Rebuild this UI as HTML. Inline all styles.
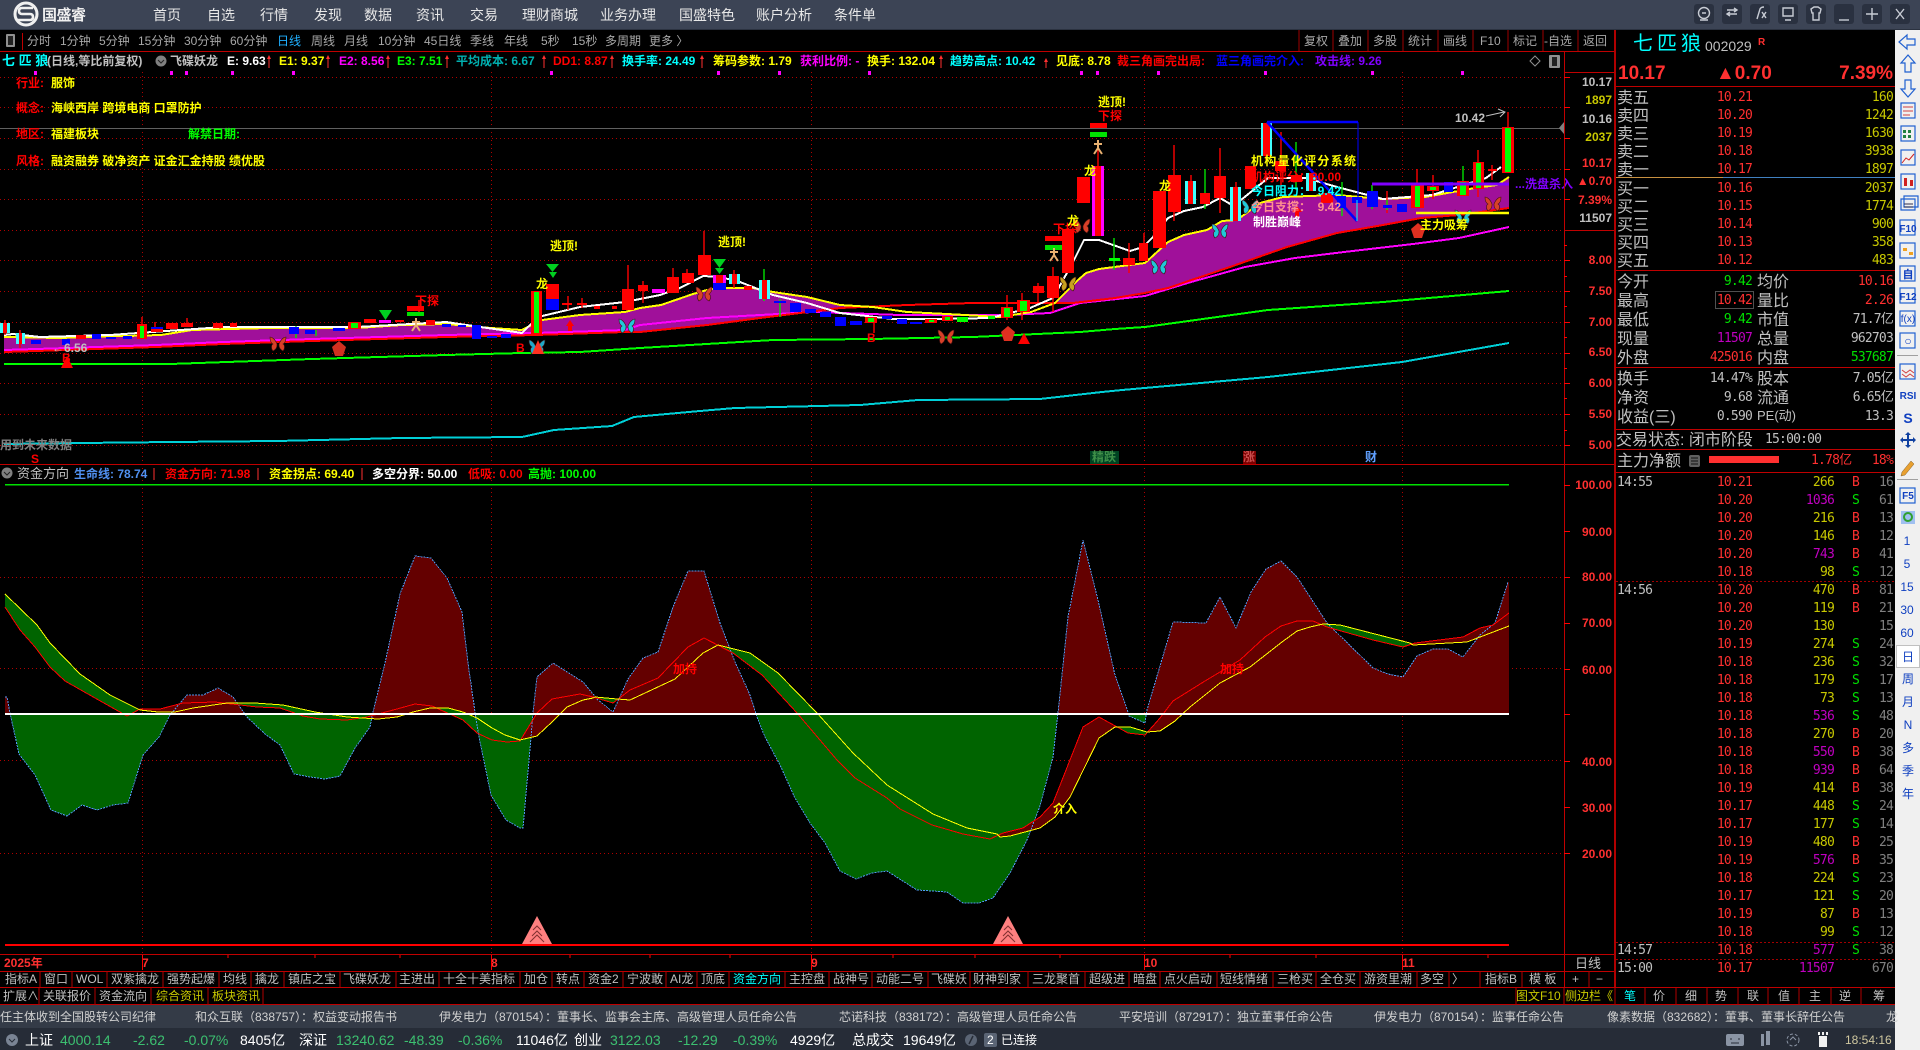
<!DOCTYPE html>
<html lang="zh-CN">
<head>
<meta charset="utf-8">
<title>七匹狼 002029</title>
<style>
html,body{margin:0;padding:0;background:#000;width:1920px;height:1050px;overflow:hidden}
svg{display:block}
text{font-family:"Liberation Sans","Noto Sans CJK SC",sans-serif;font-size:12px;white-space:pre}
.b{font-weight:bold}
.g{fill:#c0c0c0}
.r{fill:#ff3030}
.rr{fill:#ff0000}
.y{fill:#ffff00}
.c{fill:#00ffff}
.gr{fill:#00ff00}
.m{fill:#ff00ff}
.w{fill:#fff}
.e{text-anchor:end}
.mid{text-anchor:middle}
.n{font-family:"DejaVu Sans Mono","Liberation Mono",monospace;font-size:13px;letter-spacing:-.8px}
.l{font-size:16px;fill:#c0c0c0}
.o{fill:#c8c800}
.p{fill:#c000c0}
.d{fill:#808080}
.ng{fill:#00e000}
.st{font-size:14px}
.ax{font-weight:bold;fill:#ff3030;text-anchor:end}
.sb{fill:#1040c0;text-anchor:middle}
polyline{shape-rendering:crispEdges}
</style>
</head>
<body>
<svg width="1920" height="1050" viewBox="0 0 1920 1050" xmlns="http://www.w3.org/2000/svg">
<defs>
<path id="bfly" stroke="#401010" stroke-width=".6" d="M-1 0C-3-5-6-7-8-7C-8-3-7-1-5 0C-7 1-7 5-5 7C-3 6-1 4-1 1ZM1 0C3-5 6-7 8-7C8-3 7-1 5 0C7 1 7 5 5 7C3 6 1 4 1 1Z"/>
<clipPath id="up"><rect x="0" y="480" width="1564" height="234"/></clipPath>
<clipPath id="dn"><rect x="0" y="714" width="1564" height="240"/></clipPath>
<clipPath id="aboveRed"><polygon points="5,400 5,607 20,630 35,647 50,667 65,681 95,698 127,716 140,709 160,709 183,703 215,702 257,707 280,708 303,716 320,719 347,720 367,717 397,709 415,704 432,706 463,720 477,733 492,740 507,742 520,741 537,713 552,699 580,694 593,697 613,703 630,690 658,678 688,647 704,638 733,653 762,675 797,713 837,760 855,778 887,798 900,809 932,825 963,834 990,839 1003,833 1023,828 1040,817 1053,803 1083,727 1099,717 1128,733 1145,735 1160,718 1173,701 1205,681 1240,660 1265,637 1281,626 1297,621 1313,621 1327,627 1373,640 1403,647 1415,643 1463,637 1480,628 1493,625 1509,613 1509,400"/></clipPath>
<clipPath id="belowRed"><polygon points="5,1000 5,607 20,630 35,647 50,667 65,681 95,698 127,716 140,709 160,709 183,703 215,702 257,707 280,708 303,716 320,719 347,720 367,717 397,709 415,704 432,706 463,720 477,733 492,740 507,742 520,741 537,713 552,699 580,694 593,697 613,703 630,690 658,678 688,647 704,638 733,653 762,675 797,713 837,760 855,778 887,798 900,809 932,825 963,834 990,839 1003,833 1023,828 1040,817 1053,803 1083,727 1099,717 1128,733 1145,735 1160,718 1173,701 1205,681 1240,660 1265,637 1281,626 1297,621 1313,621 1327,627 1373,640 1403,647 1415,643 1463,637 1480,628 1493,625 1509,613 1509,1000"/></clipPath>
</defs>

<rect width="1920" height="1050" fill="#000"/>

<!-- title bar -->
<rect width="1920" height="30" fill="#3c4455"/>
<rect y="29" width="1920" height="1" fill="#2b3240"/>
<circle cx="26" cy="14" r="11" fill="none" stroke="#f0f0f0" stroke-width="3"/>
<path d="M33 8H22q-3 0-3 3t3 3h8q3 0 3 3t-3 3H16" fill="none" stroke="#f0f0f0" stroke-width="2.6"/>
<text x="42" y="20" class="b" style="font-size:15px" fill="#f0f0f0" textLength="44">国盛睿</text>
<g style="font-size:14px" fill="#e8e8e8">
<text x="153" y="20" style="font-size:14px">首页</text>
<text x="207" y="20" style="font-size:14px">自选</text>
<text x="260" y="20" style="font-size:14px">行情</text>
<text x="314" y="20" style="font-size:14px">发现</text>
<text x="364" y="20" style="font-size:14px">数据</text>
<text x="416" y="20" style="font-size:14px">资讯</text>
<text x="470" y="20" style="font-size:14px">交易</text>
<text x="522" y="20" style="font-size:14px">理财商城</text>
<text x="600" y="20" style="font-size:14px">业务办理</text>
<text x="679" y="20" style="font-size:14px">国盛特色</text>
<text x="756" y="20" style="font-size:14px">账户分析</text>
<text x="834" y="20" style="font-size:14px">条件单</text>
</g>
<g fill="#2a3140">
<rect x="1694" y="4" width="20" height="20" rx="3"/><rect x="1722" y="4" width="20" height="20" rx="3"/><rect x="1750" y="4" width="20" height="20" rx="3"/><rect x="1778" y="4" width="20" height="20" rx="3"/><rect x="1806" y="4" width="20" height="20" rx="3"/><rect x="1834" y="4" width="20" height="20" rx="3"/><rect x="1862" y="4" width="20" height="20" rx="3"/><rect x="1890" y="4" width="20" height="20" rx="3"/>
</g>
<g fill="none" stroke="#c8ccd4" stroke-width="1.4">
<circle cx="1704" cy="13" r="5.5"/><path d="M1702 13h4M1700 20h8"/>
<path d="M1727 10h10M1727 14h10M1734 8l3 2-3 2M1730 12l-3 2 3 2"/>
<path d="M1757 19l3-10q1-2 4-2M1762 12l4 6M1766 12l-4 6"/>
<path d="M1783 8h10v8h-10zM1785 20h6"/>
<path d="M1811 9l3-2h4l3 2-1 4h-1v7h-6v-7h-1z"/>
<path d="M1839 20h10"/>
<path d="M1872 8v12M1866 14h12"/>
<path d="M1896 9l8 10M1904 9l-8 10"/>
</g>

<!-- sidebar -->
<rect x="1895" y="30" width="25" height="1020" fill="#f0f0f0"/>

<!-- toolbar row -->
<rect x="6" y="34" width="9" height="13" fill="#909090" rx="1"/><rect x="8" y="36" width="5" height="9" fill="#222"/>
<rect x="22" y="33" width="1" height="17" fill="#c00000"/>
<g class="g" fill="#a8a8a8">
<text x="27" y="45" fill="#a8a8a8">分时</text><text x="60" y="45" fill="#a8a8a8">1分钟</text><text x="99" y="45" fill="#a8a8a8">5分钟</text><text x="138" y="45" fill="#a8a8a8">15分钟</text><text x="184" y="45" fill="#a8a8a8">30分钟</text><text x="230" y="45" fill="#a8a8a8">60分钟</text><text x="277" y="45" fill="#20b0ff">日线</text><text x="311" y="45" fill="#a8a8a8">周线</text><text x="344" y="45" fill="#a8a8a8">月线</text><text x="378" y="45" fill="#a8a8a8">10分钟</text><text x="424" y="45" fill="#a8a8a8">45日线</text><text x="470" y="45" fill="#a8a8a8">季线</text><text x="504" y="45" fill="#a8a8a8">年线</text><text x="541" y="45" fill="#a8a8a8">5秒</text><text x="572" y="45" fill="#a8a8a8">15秒</text><text x="605" y="45" fill="#a8a8a8">多周期</text><text x="649" y="45" fill="#a8a8a8">更多 〉</text>
</g>
<g fill="#a8a8a8">
<text x="1304" y="45" fill="#a8a8a8">复权</text><text x="1338" y="45" fill="#a8a8a8">叠加</text><text x="1373" y="45" fill="#a8a8a8">多股</text><text x="1408" y="45" fill="#a8a8a8">统计</text><text x="1443" y="45" fill="#a8a8a8">画线</text><text x="1480" y="45" fill="#a8a8a8">F10</text><text x="1513" y="45" fill="#a8a8a8">标记</text><text x="1544" y="45" fill="#a8a8a8">-自选</text><text x="1583" y="45" fill="#a8a8a8">返回</text>
</g>
<path d="M1299 30v21M1333 30v21M1368 30v21M1403 30v21M1438 30v21M1473 30v21M1508 30v21M1543 30v21M1578 30v21" stroke="#a00000" fill="none"/>
<rect x="0" y="51" width="1615" height="1" fill="#c00000"/>

<!-- upper grid -->
<g fill="none" stroke="#b00000" stroke-dasharray="1 3">
<path d="M0 77.500H1564M0 107.500H1564M0 138.500H1564M0 169.500H1564M0 199.500H1564M0 230.500H1564M0 260.500H1564M0 291.500H1564M0 322.500H1564M0 353.500H1564M0 383.500H1564M0 414.500H1564M0 445.500H1564"/>
<path d="M142.500 72V954M491.500 72V954M811.500 72V954M1144.500 72V954M1402.500 72V954"/>
<path d="M0 577.500H1564M0 668.500H1564M0 760.500H1564M0 853.500H1564"/>
</g>
<rect x="0" y="128" width="1564" height="1" fill="#606060"/>
<path d="M1564 122l-5 6 5 6z" fill="#808080"/>

<!-- indicator header -->
<g class="b">
<text x="2" y="65" class="c" style="font-size:13px">七 匹 狼</text>
<text x="47" y="65" class="g" fill="#c0c0c0">(日线,等比前复权)</text>
<circle cx="161" cy="61" r="5.5" fill="#808080"/><path d="M158 60l3 3 3-3" stroke="#222" fill="none"/>
<text x="170" y="65" class="g">飞碟妖龙</text>
<text x="227" y="65" class="w">E: 9.63</text>
<text x="279" y="65" class="y">E1: 9.37</text>
<text x="339" y="65" class="m">E2: 8.56</text>
<text x="397" y="65" class="gr">E3: 7.51</text>
<text x="456" y="65" fill="#00b0b0">平均成本: 6.67</text>
<text x="553" y="65" class="rr">DD1: 8.87</text>
<text x="622" y="65" class="c">换手率: 24.49</text>
<text x="713" y="65" class="y">筹码参数: 1.79</text>
<text x="800" y="65" class="m">获利比例: -</text>
<text x="867" y="65" class="y">换手: 132.04</text>
<text x="950" y="65" class="c">趋势高点: 10.42</text>
<text x="1056" y="65" class="y">见底: 8.78</text>
<text x="1117" y="65" class="rr">裁三角画完出局:</text>
<text x="1216" y="65" fill="#0000ff">蓝三角画完介入:</text>
<text x="1315" y="65" fill="#8000ff">攻击线: 9.26</text>
</g>
<path d="M269 68v-12M328 68v-12M388 68v-12M447 68v-12M544 68v-12M612 68v-12M702 68v-12M941 68v-12M1046 68v-8" stroke="#ff3030" fill="none"/>
<path d="M267 59l2-4 2 4zM326 59l2-4 2 4zM386 59l2-4 2 4zM445 59l2-4 2 4zM542 59l2-4 2 4zM610 59l2-4 2 4zM700 59l2-4 2 4zM939 59l2-4 2 4zM1044 62l2-4 2 4z" fill="#ff3030"/>
<path d="M1535 56l5 5-5 5-5-5z" fill="none" stroke="#909090"/>
<rect x="1549" y="55" width="11" height="13" rx="1" fill="#909090"/><rect x="1552" y="57" width="5" height="9" fill="#222"/>
<path d="M34 71h3v4h-3zM170 71h3v4h-3zM185 71h3v4h-3zM231 71h3v4h-3zM292 71h3v4h-3zM550 71h3v4h-3zM717 71h3v4h-3zM778 71h3v4h-3zM868 71h3v4h-3zM1080 71h3v4h-3zM1096 71h3v4h-3zM1157 71h3v4h-3zM1264 71h3v4h-3zM1371 71h3v4h-3zM1461 71h3v4h-3z" fill="#ff00ff"/>

<!-- fundamentals overlay -->
<g class="b">
<text x="16" y="87" class="rr">行业:</text><text x="51" y="87" class="y">服饰</text>
<text x="16" y="112" class="rr">概念:</text><text x="51" y="112" class="y">海峡西岸 跨境电商 口罩防护</text>
<text x="16" y="138" class="rr">地区:</text><text x="51" y="138" class="y">福建板块</text><text x="188" y="138" class="gr">解禁日期:</text>
<text x="16" y="165" class="rr">风格:</text><text x="51" y="165" class="y">融资融券 破净资产 证金汇金持股 绩优股</text>
</g>

<!-- upper chart -->
<polygon fill="#a0109a" points="4,337 60,338 89,337 161,335 192,330 268,328 357,328 402,325 446,324 491,328 522,330 542,320 580,315 625,312 640,308 661,305 693,294 707,290 720,288 753,288 773,292 807,297 840,305 850,306 840,308 800,313 760,318 707,325 640,332 625,332 536,335 446,337 312,341 223,344 156,347 36,351 4,352"/>
<polygon fill="#a0109a" points="1055,303 1078,280 1086,273 1099,269 1145,263 1168,242 1184,235 1207,230 1222,221 1237,220 1260,203 1283,197 1337,195 1383,199 1425,197 1475,188 1497,185 1509,177 1509,208 1459,215 1421,218 1383,225 1337,233 1287,247 1230,267 1168,288 1145,293 1115,298 1073,303"/>
<g fill="none" stroke-width="2">
<polyline stroke="#00d0d8" points="4,444 80,443 172,442 277,441 402,438 522,437 554,430 612,426 634,417 700,411 735,408 860,405 918,400 1040,399 1102,392 1122,390 1268,377 1402,362 1509,343"/>
<polyline stroke="#00ff00" points="4,364 170,364 312,359 446,355 522,353 580,352 640,348 773,340 870,339 973,337 1080,332 1115,329 1145,327 1268,310 1383,302 1509,291"/>
<polyline stroke="#ff00ff" points="4,350 36,349 156,345 223,342 312,339 446,335 536,333 625,330 640,325 707,318 760,315 813,312 900,315 1007,315 1050,313 1080,303 1145,296 1191,282 1245,267 1295,258 1344,252 1413,244 1459,238 1509,227"/>
<polyline stroke="#ff0000" points="4,352 36,351 156,347 223,344 312,341 446,337 536,335 625,332 640,332 707,325 760,318 800,313 840,308 907,305 973,303 1073,303 1115,298 1145,293 1168,288 1230,267 1287,247 1337,233 1383,225 1421,218 1459,215 1509,208"/>
<polyline stroke="#ffff00" points="4,337 60,338 89,337 161,335 192,330 268,328 357,328 402,325 446,324 491,328 522,330 542,320 580,315 625,312 640,308 661,305 693,294 707,290 720,288 753,288 773,292 807,297 840,305 873,307 907,312 947,314 1000,317 1031,312 1055,303 1078,280 1086,273 1099,269 1145,263 1168,242 1184,235 1207,230 1222,221 1237,220 1260,203 1283,197 1337,195 1383,199 1425,197 1475,188 1497,185 1509,177"/>
<polyline stroke="#ffffff" points="4,335 13,334 40,337 110,335 223,327 357,327 446,322 522,333 538,317 580,307 625,302 660,295 680,288 703,276 720,277 740,282 773,295 807,303 840,313 893,319 940,319 990,318 1030,308 1053,298 1073,262 1084,240 1099,240 1130,251 1143,247 1153,237 1168,218 1184,211 1203,207 1220,198 1232,205 1241,200 1268,178 1306,178 1337,187 1383,199 1432,195 1486,178 1501,167"/>
</g>

<!-- wicks -->
<path d="M5 320v15M20 330v18M142 317v22M155 322v10M187 318v8M419 300v12M628 265v45M643 281v22M673 268v25M687 269v14M704 231v44M734 270v18M1007 295v25M1022 293v27M1038 283v20M1053 267v45M1098 140v96M1129 243v30M1174 145v76M1191 175v29M1220 148v65M1236 182v39M1266 123v37M1281 132v58M1387 191v22M1417 169v39M1433 175v24M1478 150v47M1492 165v15M1508 112v15M568 296v14M582 298v10M874 323v10M1144 233v10M540 345v4" stroke="#ff0000" stroke-width="1.400" fill="none"/>
<path d="M764 269v32M780 299v18M1114 238v32M1205 169v40M1296 142v48M1342 182v34M1372 185v24M1463 166v30M296 326v12M316 330v6M1144 243v18M1387 200v10" stroke="#00e000" stroke-width="1.400" fill="none"/>

<!-- candle bodies -->
<path fill="#ff0000" d="M0 323H10V333H0ZM16 333H25V344H16ZM76 335H86V339H76ZM137 324H147V339H137ZM151 329H163V332H151ZM166 323H178V329H166ZM181 323H193V327H181ZM213 323H223V328H213ZM230 323H237V327H230ZM348 322H361V329H348ZM364 319H376V323H364ZM379 320H391V323H379ZM395 320H404V322H395ZM426 320H435V325H426ZM531 291H542V334H531ZM546 284H559V299H546ZM562 303H572V305H562ZM577 303H587V305H577ZM594 306H600V309H594ZM612 306H617V309H612ZM622 289H634V310H622ZM638 285H648V291H638ZM652 289H665V293H652ZM667 277H679V293H667ZM682 273H694V283H682ZM698 255H711V275H698ZM713 275H726V283H713ZM729 274H740V284H729ZM744 286H752V290H744ZM759 280H770V299H759ZM865 317H877V323H865ZM925 319H937V323H925ZM942 316H953V321H942ZM1001 307H1013V318H1001ZM1017 300H1030V312H1017ZM1033 286H1044V293H1033ZM1047 276H1059V298H1047ZM1062 229H1074V273H1062ZM1077 177H1090V203H1077ZM1092 166H1104V236H1092ZM1123 258H1135V265H1123ZM1139 243H1148V261H1139ZM1153 191H1166V248H1153ZM1168 175H1181V212H1168ZM1185 181H1196V204H1185ZM1200 193H1210V204H1200ZM1214 176H1226V198H1214ZM1230 187H1241V221H1230ZM1245 166H1256V189H1245ZM1261 123H1272V156H1261ZM1275 161H1286V171H1275ZM1291 175H1302V182H1291ZM1306 173H1316V191H1306ZM1321 193H1333V203H1321ZM1411 185H1424V208H1411ZM1427 186H1439V191H1427ZM1457 181H1469V196H1457ZM1473 162H1484V189H1473ZM1488 169H1497V171H1488ZM1502 127H1514V173H1502Z"/>
<path fill="#0000ff" d="M31 340H41V344H31ZM62 339H70V345H62ZM92 334H101V339H92ZM106 337H116V339H106ZM123 336H132V339H123ZM151 327H163V329H151ZM289 327H299V334H289ZM305 330H315V334H305ZM333 328H345V331H333ZM442 324H451V327H442ZM458 325H466V327H458ZM472 325H481V339H472ZM487 336H497V338H487ZM501 334H511V338H501ZM546 299H559V310H546ZM713 283H726V290H713ZM774 301H786V303H774ZM790 303H801V312H790ZM805 309H816V313H805ZM820 312H831V317H820ZM835 317H846V326H835ZM850 321H862V325H850ZM882 316H892V319H882ZM897 319H907V324H897ZM910 322H922V324H910ZM1337 196H1346V208H1337ZM1352 197H1362V203H1352ZM1367 191H1378V207H1367ZM1383 205H1392V208H1383ZM1397 204H1407V212H1397ZM1444 182H1453V192H1444Z"/>
<path fill="#00ff00" d="M140 326H144V338H140ZM351 323H358V328H351ZM534 292H539V333H534ZM868 318H874V322H868ZM929 320H934V322H929ZM945 317H950V320H945ZM957 317H968V322H957ZM988 316H995V319H988ZM1004 308H1010V317H1004ZM1020 301H1027V311H1020ZM1109 258H1120V261H1109ZM1415 186H1420V207H1415ZM1430 187H1436V190H1430ZM1460 182H1466V195H1460ZM1476 163H1481V188H1476ZM1505 128H1511V172H1505Z"/>
<path fill="#40ffff" d="M0 323h3v10H0ZM7 323h3v10H7ZM16 333h3v11h-3ZM22 333h3v11h-3ZM729 274h3v10h-3ZM737 274h3v10h-3ZM759 280h3v19h-3ZM767 280h3v19h-3ZM1185 181h3v23h-3ZM1193 181h3v23h-3ZM1230 187h3v34h-3ZM1238 187h3v34h-3ZM1261 123h2v33h-2ZM1270 123h2v33h-2ZM1306 173h3v18h-3ZM1313 173h3v18h-3Z"/>
<path fill="#ff00ff" d="M1092 166h3v70h-3ZM1101 166h3v70h-3ZM713 275h3v8h-3ZM723 275h3v8h-3ZM379 320h12v3h-12ZM652 289h13v4h-13Z"/>

<!-- markers -->
<path d="M1090 123h17v5h-17z" fill="#ff0000"/><path d="M1090 132h17v5h-17z" fill="#00e000"/>
<path d="M1045 236h17v5h-17z" fill="#ff0000"/><path d="M1045 245h17v5h-17z" fill="#00e000"/>
<path d="M407 306h17v5h-17z" fill="#ff0000"/><path d="M407 312h17v4h-17z" fill="#00e000"/>
<path d="M713 259h13l-6.500 9z M715 268h9l-4.500 6z M379 310h13l-6.500 10z M546 264h13l-6.500 8z M549 272h8l-4 6z" fill="#00d020"/>
<g fill="none" stroke="#e8b070" stroke-width="2">
<path d="M1098 140v8l-4 6M1098 148l4 6M1094 144h8"/>
<path d="M1054 248v7l-4 6M1054 255l4 6M1050 252h8"/>
<path d="M416 318v7l-4 6M416 325l4 6M412 322h8"/>
</g>
<use href="#bfly" x="704" y="294" fill="#d84028"/>
<use href="#bfly" x="946" y="337" fill="#d84028"/>
<use href="#bfly" x="278" y="344" fill="#d84028"/>
<use href="#bfly" x="1082" y="226" fill="#d84028"/>
<use href="#bfly" x="1493" y="204" fill="#d84028"/>
<use href="#bfly" x="1068" y="284" fill="#c8a020"/>
<use href="#bfly" x="627" y="326" fill="#20c8d8"/>
<use href="#bfly" x="1159" y="267" fill="#20c8d8"/>
<use href="#bfly" x="1220" y="231" fill="#20c8d8"/>
<use href="#bfly" x="1250" y="207" fill="#20c8d8"/>
<use href="#bfly" x="1463" y="217" fill="#20c8d8"/>
<use href="#bfly" x="537" y="347" fill="#20a8c8"/>
<g stroke-width="0">
<path d="M1008 326l7 6-3 9h-8l-3-9z" fill="#e03020"/>
<path d="M339 341l7 6-3 9h-8l-3-9z" fill="#d03020"/>
<path d="M1418 223l7 6-3 9h-8l-3-9z" fill="#e03020"/>
<path d="M1024 333l6 11h-12z" fill="#ff0000"/>
<path d="M67 356l6 12h-12z" fill="#ff0000"/>
<path d="M538 340l6 14h-12z" fill="#ff3020"/>
</g>
<path d="M570 320l4 6h-2v5h-4v-5h-2zM1297 206l5 6h-3v5h-4v-5h-3z" fill="#ff0000"/>

<!-- boxes and lines -->
<g fill="none" stroke="#0000ff">
<path d="M1267 122H1358" stroke-width="2.500"/><path d="M1358 122V197"/><path d="M1267 122L1357 221" stroke-width="2.500"/>
</g>
<path d="M1357 200v21" stroke="#00ffff" fill="none"/>
<path d="M1372 184H1509" stroke="#8000ff" stroke-width="3" fill="none"/>
<path d="M1416 213H1509" stroke="#ffff00" stroke-width="2.500" fill="none"/>

<!-- chart labels -->
<g class="b">
<text x="1098" y="106" class="y">逃顶!</text>
<text x="1098" y="120" class="rr">下探</text>
<text x="544" y="250" class="y" dx="6">逃顶!</text>
<text x="718" y="246" class="y">逃顶!</text>
<text x="415" y="305" class="rr">下探</text>
<text x="1053" y="233" class="rr">下探</text>
<text x="1084" y="175" class="y">龙</text><text x="1159" y="190" class="y">龙</text><text x="1067" y="225" class="y">龙</text><text x="536" y="288" class="y">龙</text>
<text x="1251" y="165" class="y" textLength="105">机构量化评分系统</text>
<text x="1251" y="181" class="rr">机构评分：80.00</text>
<text x="1251" y="195" class="c">今日阻力：  9.42</text>
<text x="1251" y="211" fill="#ff9090">今日支撑：  9.42</text>
<text x="1253" y="226" class="w">制胜巅峰</text>
<text x="1420" y="229" class="y">主力吸筹</text>
<text x="1455" y="122" class="g">10.42</text>
<text x="1515" y="188" fill="#8000ff">...洗盘杀入</text>
<text x="52" y="352" class="g">←6.56</text>
<text x="62" y="362" class="rr">B</text>
<text x="516" y="352" class="rr">B</text>
<text x="867" y="342" class="rr">B</text>
<text x="0" y="449" fill="#808080">用到未来数据</text>
<text x="31" y="463" class="rr">S</text>
<text x="1092" y="461" fill="#d0ff80">精跌</text>
<text x="1243" y="461" class="w">涨</text>
<text x="1365" y="461" fill="#60a0ff">财</text>
</g>
<path d="M1486 116l18-4M1498 109l7 3-5 5" fill="none" stroke="#c0c0c0"/>
<rect x="1243" y="451" width="13" height="13" fill="#b00000" opacity=".7"/>
<rect x="1090" y="451" width="29" height="13" fill="#006030" opacity=".7"/>

<!-- split line and lower header -->
<rect x="0" y="464" width="1615" height="1" fill="#c00000"/>
<circle cx="7" cy="473" r="5.500" fill="#808080"/><path d="M4 472l3 3 3-3" stroke="#222" fill="none"/>
<g class="b">
<text x="17" y="478" class="g" style="font-weight:normal;font-size:13px">资金方向</text>
<text x="74" y="478" fill="#5090f0">生命线: 78.74</text>
<text x="165" y="478" class="rr">资金方向: 71.98</text>
<text x="269" y="478" class="y">资金拐点: 69.40</text>
<text x="372" y="478" class="w">多空分界: 50.00</text>
<text x="468" y="478" class="rr">低吸: 0.00</text>
<text x="528" y="478" class="gr">高抛: 100.00</text>
</g>
<path d="M154 480v-12M258 480v-12M362 480v-12" stroke="#ff3030" fill="none"/>
<rect x="5" y="484" width="1504" height="1.500" fill="#00e000"/>

<!-- lower chart fills -->
<polygon clip-path="url(#up)" fill="#640000" points="5,714 5,697 7,697 10,713 19,754 35,775 51,810 67,816 82,805 97,810 113,805 128,803 143,755 159,737 170,715 187,695 203,695 218,688 233,697 247,717 265,734 280,745 294,774 310,777 325,779 340,776 355,748 370,727 373,712 385,663 400,594 415,556 431,558 447,578 462,612 468,663 475,712 479,737 491,795 506,820 520,828 523,828 531,738 533,713 537,677 553,663 583,682 598,700 613,712 628,679 643,658 658,652 673,607 688,571 704,571 720,623 735,662 750,695 757,717 765,737 780,765 795,798 810,823 825,843 840,871 856,879 872,873 887,871 917,890 947,892 963,903 979,903 993,898 1010,873 1027,840 1040,806 1053,757 1058,713 1068,617 1083,540 1098,600 1115,675 1128,712 1129,716 1145,723 1147,710 1173,622 1206,623 1220,597 1236,628 1251,592 1266,569 1281,561 1297,577 1312,600 1327,623 1373,668 1388,674 1403,677 1417,656 1433,649 1448,649 1463,657 1480,635 1495,623 1508,582 1509,582 1509,714"/>
<polygon clip-path="url(#dn)" fill="#006400" points="5,714 5,697 7,697 10,713 19,754 35,775 51,810 67,816 82,805 97,810 113,805 128,803 143,755 159,737 170,715 187,695 203,695 218,688 233,697 247,717 265,734 280,745 294,774 310,777 325,779 340,776 355,748 370,727 373,712 385,663 400,594 415,556 431,558 447,578 462,612 468,663 475,712 479,737 491,795 506,820 520,828 523,828 531,738 533,713 537,677 553,663 583,682 598,700 613,712 628,679 643,658 658,652 673,607 688,571 704,571 720,623 735,662 750,695 757,717 765,737 780,765 795,798 810,823 825,843 840,871 856,879 872,873 887,871 917,890 947,892 963,903 979,903 993,898 1010,873 1027,840 1040,806 1053,757 1058,713 1068,617 1083,540 1098,600 1115,675 1128,712 1129,716 1145,723 1147,710 1173,622 1206,623 1220,597 1236,628 1251,592 1266,569 1281,561 1297,577 1312,600 1327,623 1373,668 1388,674 1403,677 1417,656 1433,649 1448,649 1463,657 1480,635 1495,623 1508,582 1509,582 1509,714"/>
<!-- band: yellow above red = green; red above yellow = dark red -->
<polygon clip-path="url(#aboveRed)" fill="#006400" points="5,594 37,625 50,643 80,674 110,695 140,710 158,712 175,712 193,708 227,703 255,703 283,705 315,712 347,717 378,719 397,717 413,712 430,708 448,708 463,712 477,718 492,728 505,735 520,740 537,736 552,722 567,707 583,700 593,698 595,697 617,699 630,700 675,679 703,653 718,645 750,653 778,673 817,713 853,753 887,785 933,814 967,828 997,834 1000,837 1010,836 1040,828 1055,817 1070,797 1099,738 1115,727 1130,727 1147,732 1160,731 1175,721 1190,707 1220,683 1250,667 1282,642 1297,631 1310,627 1323,624 1340,625 1410,643 1413,645 1467,642 1509,626 1509,1000 5,1000"/>
<polygon clip-path="url(#belowRed)" fill="#640000" points="5,594 37,625 50,643 80,674 110,695 140,710 158,712 175,712 193,708 227,703 255,703 283,705 315,712 347,717 378,719 397,717 413,712 430,708 448,708 463,712 477,718 492,728 505,735 520,740 537,736 552,722 567,707 583,700 593,698 595,697 617,699 630,700 675,679 703,653 718,645 750,653 778,673 817,713 853,753 887,785 933,814 967,828 997,834 1000,837 1010,836 1040,828 1055,817 1070,797 1099,738 1115,727 1130,727 1147,732 1160,731 1175,721 1190,707 1220,683 1250,667 1282,642 1297,631 1310,627 1323,624 1340,625 1410,643 1413,645 1467,642 1509,626 1509,400 5,400"/>
<polyline fill="none" stroke="#5098f0" stroke-dasharray="2 1" points="5,697 7,697 10,713 19,754 35,775 51,810 67,816 82,805 97,810 113,805 128,803 143,755 159,737 170,715 187,695 203,695 218,688 233,697 247,717 265,734 280,745 294,774 310,777 325,779 340,776 355,748 370,727 373,712 385,663 400,594 415,556 431,558 447,578 462,612 468,663 475,712 479,737 491,795 506,820 520,828 523,828 531,738 533,713 537,677 553,663 583,682 598,700 613,712 628,679 643,658 658,652 673,607 688,571 704,571 720,623 735,662 750,695 757,717 765,737 780,765 795,798 810,823 825,843 840,871 856,879 872,873 887,871 917,890 947,892 963,903 979,903 993,898 1010,873 1027,840 1040,806 1053,757 1058,713 1068,617 1083,540 1098,600 1115,675 1128,712 1129,716 1145,723 1147,710 1173,622 1206,623 1220,597 1236,628 1251,592 1266,569 1281,561 1297,577 1312,600 1327,623 1373,668 1388,674 1403,677 1417,656 1433,649 1448,649 1463,657 1480,635 1495,623 1508,582"/>
<polyline fill="none" stroke="#ff0000" stroke-width="1" points="5,607 20,630 35,647 50,667 65,681 95,698 127,716 140,709 160,709 183,703 215,702 257,707 280,708 303,716 320,719 347,720 367,717 397,709 415,704 432,706 463,720 477,733 492,740 507,742 520,741 537,713 552,699 580,694 593,697 613,703 630,690 658,678 688,647 704,638 733,653 762,675 797,713 837,760 855,778 887,798 900,809 932,825 963,834 990,839 1003,833 1023,828 1040,817 1053,803 1083,727 1099,717 1128,733 1145,735 1160,718 1173,701 1205,681 1240,660 1265,637 1281,626 1297,621 1313,621 1327,627 1373,640 1403,647 1415,643 1463,637 1480,628 1493,625 1509,613"/>
<polyline fill="none" stroke="#ffff00" stroke-width="1" points="5,594 37,625 50,643 80,674 110,695 140,710 158,712 175,712 193,708 227,703 255,703 283,705 315,712 347,717 378,719 397,717 413,712 430,708 448,708 463,712 477,718 492,728 505,735 520,740 537,736 552,722 567,707 583,700 593,698 595,697 617,699 630,700 675,679 703,653 718,645 750,653 778,673 817,713 853,753 887,785 933,814 967,828 997,834 1000,837 1010,836 1040,828 1055,817 1070,797 1099,738 1115,727 1130,727 1147,732 1160,731 1175,721 1190,707 1220,683 1250,667 1282,642 1297,631 1310,627 1323,624 1340,625 1410,643 1413,645 1467,642 1509,626"/>
<rect x="5" y="713" width="1504" height="2" fill="#fff"/>
<g class="b">
<text x="673" y="673" class="rr">加持</text>
<text x="1220" y="673" class="rr">加持</text>
<text x="1053" y="813" class="y">介入</text>
</g>
<path d="M522 944l15-28 15 28zM993 944l15-28 15 28z" fill="#ff8080"/>
<path d="M530 942l7-7 7 7M532 936l5-5 5 5M533 930l4-4 4 4M1001 942l7-7 7 7M1003 936l5-5 5 5M1004 930l4-4 4 4" stroke="#803030" fill="none"/>
<rect x="5" y="944" width="1504" height="2" fill="#ff0000"/>

<!-- axis frame -->
<rect x="1564" y="51" width="1" height="936" fill="#c00000"/>
<rect x="1564" y="72" width="51" height="1" fill="#c00000"/>
<rect x="1564" y="230" width="51" height="1" fill="#c00000"/>
<rect x="1564" y="464" width="51" height="1" fill="#c00000"/>
<rect x="0" y="954" width="1615" height="1" fill="#c00000"/>
<rect x="0" y="971" width="1615" height="1" fill="#c00000"/>
<rect x="0" y="987" width="1895" height="1" fill="#c00000"/>
<rect x="0" y="1004" width="1895" height="1" fill="#c00000"/>
<rect x="1614" y="30" width="2" height="957" fill="#b00000"/>
<path d="M1564 77.500h6M1564 107.500h6M1564 138.500h6M1564 169.500h6M1564 199.500h6M1564 245.500h3M1564 260.500h6M1564 276.500h3M1564 291.500h6M1564 306.500h3M1564 322.500h6M1564 337.500h3M1564 353.500h6M1564 368.500h3M1564 383.500h6M1564 398.500h3M1564 414.500h6M1564 430.500h3M1564 445.500h6M1564 485.500h6M1564 531.500h6M1564 577.500h6M1564 623.500h6M1564 669.500h6M1564 714.500h6M1564 761.500h6M1564 807.500h6M1564 853.500h6" stroke="#ff0000" fill="none"/>

<g class="b">
<text x="1612" y="86" class="e g">10.17</text>
<text x="1612" y="104" class="e o">1897</text>
<text x="1612" y="123" class="e g">10.16</text>
<text x="1612" y="141" class="e o">2037</text>
<text x="1612" y="167" class="ax">10.17</text>
<text x="1612" y="185" class="ax">▲0.70</text>
<text x="1612" y="204" class="ax">7.39%</text>
<text x="1612" y="222" class="e g">11507</text>
<text x="1612" y="264" class="ax">8.00</text><text x="1612" y="295" class="ax">7.50</text><text x="1612" y="326" class="ax">7.00</text><text x="1612" y="356" class="ax">6.50</text><text x="1612" y="387" class="ax">6.00</text><text x="1612" y="418" class="ax">5.50</text><text x="1612" y="449" class="ax">5.00</text>
<text x="1612" y="489" class="ax">100.00</text><text x="1612" y="536" class="ax">90.00</text><text x="1612" y="581" class="ax">80.00</text><text x="1612" y="627" class="ax">70.00</text><text x="1612" y="674" class="ax">60.00</text><text x="1612" y="766" class="ax">40.00</text><text x="1612" y="812" class="ax">30.00</text><text x="1612" y="858" class="ax">20.00</text>
</g>

<!-- date row -->
<g class="b">
<text x="4" y="967" class="r">2025年</text>
<text x="142" y="967" class="r">7</text><text x="491" y="967" class="r">8</text><text x="811" y="967" class="r">9</text><text x="1144" y="967" class="r">10</text><text x="1402" y="967" class="r">11</text>
</g>
<path d="M142.500 955v15M491.500 955v15M811.500 955v15M1144.500 955v15M1402.500 955v15M228 955v3M315 955v3M400 955v3M570 955v3M650 955v3M730 955v3M893 955v3M975 955v3M1060 955v3M1230 955v3M1316 955v3M1488 955v3" stroke="#ff0000" fill="none"/>
<text x="1575" y="968" class="g" style="font-size:13px">日线</text>

<!-- tab rows -->
<g fill="#c0c0c0">
<text x="5" y="983" class="g">指标A</text><text x="44" y="983" class="g">窗口</text><text x="76" y="983" class="g">WOL</text><text x="111" y="983" class="g">双紫擒龙</text><text x="167" y="983" class="g">强势起爆</text><text x="223" y="983" class="g">均线</text><text x="255" y="983" class="g">擒龙</text><text x="288" y="983" class="g">镇店之宝</text><text x="343" y="983" class="g">飞碟妖龙</text><text x="399" y="983" class="g">主进出</text><text x="443" y="983" class="g">十全十美指标</text><text x="524" y="983" class="g">加仓</text><text x="556" y="983" class="g">转点</text><text x="588" y="983" class="g">资金2</text><text x="627" y="983" class="g">宁波敢</text><text x="670" y="983" class="g">AI龙</text><text x="701" y="983" class="g">顶底</text><text x="733" y="983" class="c">资金方向</text><text x="789" y="983" class="g">主控盘</text><text x="833" y="983" class="g">战神号</text><text x="876" y="983" class="g">动能二号</text><text x="931" y="983" class="g">飞碟妖</text><text x="973" y="983" class="g">财神到家</text><text x="1032" y="983" class="g">三龙聚首</text><text x="1089" y="983" class="g">超级进</text><text x="1133" y="983" class="g">暗盘</text><text x="1164" y="983" class="g">点火启动</text><text x="1220" y="983" class="g">短线情绪</text><text x="1277" y="983" class="g">三枪买</text><text x="1320" y="983" class="g">全仓买</text><text x="1364" y="983" class="g">游资里潮</text><text x="1420" y="983" class="g">多空</text><text x="1452" y="983" class="g">〉</text><text x="1485" y="983" class="g">指标B</text><text x="1529" y="983" class="g">模 板</text><text x="1572" y="983" class="g">+</text><text x="1596" y="983" class="g">−</text>
<text x="3" y="1000" class="g">扩展∧</text><text x="43" y="1000" class="g">关联报价</text><text x="99" y="1000" class="g">资金流向</text><text x="156" y="1000" class="o">综合资讯</text><text x="212" y="1000" class="o">板块资讯</text>
<text x="1516" y="1000" class="o">图文F10</text><text x="1565" y="1000" class="o">侧边栏《</text>
<text x="1624" y="1000" class="c">笔</text><text x="1653" y="1000" class="g">价</text><text x="1685" y="1000" class="g">细</text><text x="1715" y="1000" class="g">势</text><text x="1747" y="1000" class="g">联</text><text x="1778" y="1000" class="g">值</text><text x="1809" y="1000" class="g">主</text><text x="1839" y="1000" class="g">逆</text><text x="1873" y="1000" class="g">筹</text>
</g>
<path d="M40 971v16M72 971v16M107 971v16M163 971v16M219 971v16M251 971v16M284 971v16M340 971v16M396 971v16M439 971v16M520 971v16M552 971v16M584 971v16M623 971v16M666 971v16M697 971v16M729 971v16M785 971v16M829 971v16M872 971v16M928 971v16M970 971v16M1028 971v16M1085 971v16M1129 971v16M1160 971v16M1217 971v16M1273 971v16M1316 971v16M1360 971v16M1417 971v16M1449 971v16M1480 971v16M1522 971v16M1589 971v16M39 988v17M95 988v17M151 988v17M208 988v17M263 988v17M1516 988v17M1564 988v17M1615 988v17M1645 988v17M1676 988v17M1707 988v17M1738 988v17M1768 988v17M1799 988v17M1831 988v17M1861 988v17" stroke="#b00000" fill="none"/>

<!-- news bar -->
<rect x="0" y="1005" width="1895" height="23" fill="#343b47"/>
<g>
<text x="0" y="1021" fill="#d0d0d0">任主体收到全国股转公司纪律</text>
<text x="195" y="1021" fill="#d0d0d0">和众互联（838757）：权益变动报告书</text>
<text x="439" y="1021" fill="#d0d0d0">伊发电力（870154）：董事长、监事会主席、高级管理人员任命公告</text>
<text x="839" y="1021" fill="#d0d0d0">芯诺科技（838172）：高级管理人员任命公告</text>
<text x="1119" y="1021" fill="#d0d0d0">平安培训（872917）：独立董事任命公告</text>
<text x="1374" y="1021" fill="#d0d0d0">伊发电力（870154）：监事任命公告</text>
<text x="1607" y="1021" fill="#d0d0d0">像素数据（832682）：董事、董事长辞任公告</text>
<text x="1886" y="1021" fill="#d0d0d0">龙</text>
</g>

<!-- status bar -->
<rect x="0" y="1028" width="1895" height="22" fill="#262c37"/>
<circle cx="12" cy="1040" r="6" fill="#7a8494"/><path d="M9 1039l3 3 3-3" stroke="#262c37" fill="none"/>
<g class="st">
<text x="25" y="1045" class="st w">上证</text><text x="60" y="1045" class="st" fill="#3cc070">4000.14</text><text x="133" y="1045" class="st" fill="#3cc070">-2.62</text><text x="184" y="1045" class="st" fill="#3cc070">-0.07%</text><text x="240" y="1045" class="st w">8405亿</text>
<text x="299" y="1045" class="st w">深证</text><text x="336" y="1045" class="st" fill="#3cc070">13240.62</text><text x="404" y="1045" class="st" fill="#3cc070">-48.39</text><text x="458" y="1045" class="st" fill="#3cc070">-0.36%</text><text x="516" y="1045" class="st w">11046亿</text>
<text x="574" y="1045" class="st w">创业</text><text x="610" y="1045" class="st" fill="#3cc070">3122.03</text><text x="678" y="1045" class="st" fill="#3cc070">-12.29</text><text x="733" y="1045" class="st" fill="#3cc070">-0.39%</text><text x="790" y="1045" class="st w">4929亿</text>
<text x="852" y="1045" class="st w">总成交</text><text x="903" y="1045" class="st w">19649亿</text>
<text x="1001" y="1044" class="w" style="font-size:12px">已连接</text>
</g>
<circle cx="971" cy="1040" r="6" fill="#5a6474"/><path d="M969 1044l4-8" stroke="#262c37" stroke-width="1.500"/>
<rect x="984" y="1033" width="13" height="14" rx="2" fill="#5a6474"/><text x="987" y="1044" class="w">2</text>
<rect x="1726" y="1034" width="18" height="12" rx="2" fill="#8a94a4"/><path d="M1730 1039h2M1738 1039h2M1731 1043h8" stroke="#262c37"/>
<path d="M1761 1034h3v12h-3zM1766 1031h4v14h-4z" fill="#8a94a4"/>
<circle cx="1793" cy="1040" r="6" fill="none" stroke="#8a94a4" stroke-dasharray="3 2"/><path d="M1790 1040l3-3 3 3" stroke="#8a94a4" fill="none"/>
<path d="M1819 1036h8v11h-8zM1818 1032h2v3h-2zM1822 1032h2v3h-2zM1826 1032h2v3h-2z" fill="#f0f0f0"/>
<text x="1845" y="1044" fill="#d0c8a0">18:54:16</text>

<!-- right panel header -->
<text x="1633" y="50" class="c" style="font-size:20px;letter-spacing:4px">七匹狼</text>
<text x="1705" y="51" class="g" style="font-size:14px">002029</text>
<text x="1758" y="45" class="r b" style="font-size:10px">R</text>
<g class="b r">
<text x="1618" y="79" class="r b" style="font-size:19px">10.17</text>
<text x="1716" y="79" class="r b" style="font-size:19px">▲0.70</text>
<text x="1893" y="79" class="r b e" style="font-size:19px">7.39%</text>
</g>
<rect x="1616" y="86" width="279" height="1" fill="#c00000"/>

<!-- order book -->
<text x="1617" y="103" class="l">卖五</text><text x="1752" y="101" class="n r e">10.21</text><text x="1893" y="101" class="n o e">160</text>
<text x="1617" y="121" class="l">卖四</text><text x="1752" y="119" class="n r e">10.20</text><text x="1893" y="119" class="n o e">1242</text>
<text x="1617" y="139" class="l">卖三</text><text x="1752" y="137" class="n r e">10.19</text><text x="1893" y="137" class="n o e">1630</text>
<text x="1617" y="157" class="l">卖二</text><text x="1752" y="155" class="n r e">10.18</text><text x="1893" y="155" class="n o e">3938</text>
<text x="1617" y="175" class="l">卖一</text><text x="1752" y="173" class="n r e">10.17</text><text x="1893" y="173" class="n o e">1897</text>
<rect x="1616" y="177" width="107" height="1" fill="#c89040"/><rect x="1723" y="177" width="172" height="1" fill="#4080c0"/>
<text x="1617" y="194" class="l">买一</text><text x="1752" y="192" class="n r e">10.16</text><text x="1893" y="192" class="n o e">2037</text>
<text x="1617" y="212" class="l">买二</text><text x="1752" y="210" class="n r e">10.15</text><text x="1893" y="210" class="n o e">1774</text>
<text x="1617" y="230" class="l">买三</text><text x="1752" y="228" class="n r e">10.14</text><text x="1893" y="228" class="n o e">900</text>
<text x="1617" y="248" class="l">买四</text><text x="1752" y="246" class="n r e">10.13</text><text x="1893" y="246" class="n o e">358</text>
<text x="1617" y="266" class="l">买五</text><text x="1752" y="264" class="n r e">10.12</text><text x="1893" y="264" class="n o e">483</text>
<rect x="1616" y="270" width="279" height="1" fill="#c00000"/>

<text x="1617" y="287" class="l">今开</text><text x="1752" y="285" class="n ng e">9.42</text><text x="1757" y="287" class="l">均价</text><text x="1893" y="285" class="n r e">10.16</text>
<rect x="1715.500" y="291.500" width="38" height="17" fill="none" stroke="#505050"/>
<text x="1617" y="306" class="l">最高</text><text x="1752" y="304" class="n r e">10.42</text><text x="1757" y="306" class="l">量比</text><text x="1893" y="304" class="n r e">2.26</text>
<text x="1617" y="325" class="l">最低</text><text x="1752" y="323" class="n ng e">9.42</text><text x="1757" y="325" class="l">市值</text><text x="1893" y="323" class="n g e">71.7亿</text>
<text x="1617" y="344" class="l">现量</text><text x="1752" y="342" class="n p e">11507</text><text x="1757" y="344" class="l">总量</text><text x="1893" y="342" class="n g e">962703</text>
<text x="1617" y="363" class="l">外盘</text><text x="1752" y="361" class="n r e">425016</text><text x="1757" y="363" class="l">内盘</text><text x="1893" y="361" class="n ng e">537687</text>
<rect x="1616" y="367" width="279" height="1" fill="#c00000"/>

<text x="1617" y="384" class="l">换手</text><text x="1752" y="382" class="n g e">14.47%</text><text x="1757" y="384" class="l">股本</text><text x="1893" y="382" class="n g e">7.05亿</text>
<text x="1617" y="403" class="l">净资</text><text x="1752" y="401" class="n g e">9.68</text><text x="1757" y="403" class="l">流通</text><text x="1893" y="401" class="n g e">6.65亿</text>
<text x="1617" y="422" class="l">收益(三)</text><text x="1752" y="420" class="n g e">0.590</text><text x="1757" y="420" class="g" style="font-size:13px">PE(动)</text><text x="1893" y="420" class="n g e">13.3</text>
<rect x="1616" y="429" width="279" height="1" fill="#c00000"/>
<text x="1616" y="445" class="l">交易状态: 闭市阶段</text><text x="1765" y="443" class="n g">15:00:00</text>
<rect x="1616" y="449" width="279" height="1" fill="#c00000"/>
<text x="1617" y="466" class="l">主力净额</text>
<rect x="1689" y="455" width="11" height="12" rx="2" fill="#606060"/><path d="M1691 458h7M1691 461h7M1691 464h7" stroke="#111"/>
<rect x="1709" y="456" width="70" height="7" fill="#ff3030"/>
<text x="1811" y="464" class="n r">1.78亿</text><text x="1893" y="464" class="n r e">18%</text>
<rect x="1616" y="472" width="279" height="1" fill="#c00000"/>

<!-- tick list -->
<text x="1617" y="486" class="n g">14:55</text>
<g class="n"><text x="1752" y="486" class="n r e">10.21</text><text x="1834" y="486" class="n o e">266</text><text x="1852" y="486" class="n r">B</text><text x="1893" y="486" class="n d e">16</text>
<text x="1752" y="504" class="n r e">10.20</text><text x="1834" y="504" class="n p e">1036</text><text x="1852" y="504" class="n ng">S</text><text x="1893" y="504" class="n d e">61</text>
<text x="1752" y="522" class="n r e">10.20</text><text x="1834" y="522" class="n o e">216</text><text x="1852" y="522" class="n r">B</text><text x="1893" y="522" class="n d e">13</text>
<text x="1752" y="540" class="n r e">10.20</text><text x="1834" y="540" class="n o e">146</text><text x="1852" y="540" class="n r">B</text><text x="1893" y="540" class="n d e">12</text>
<text x="1752" y="558" class="n r e">10.20</text><text x="1834" y="558" class="n p e">743</text><text x="1852" y="558" class="n r">B</text><text x="1893" y="558" class="n d e">41</text>
<text x="1752" y="576" class="n r e">10.18</text><text x="1834" y="576" class="n o e">98</text><text x="1852" y="576" class="n ng">S</text><text x="1893" y="576" class="n d e">12</text>
<text x="1617" y="594" class="n g">14:56</text><text x="1752" y="594" class="n r e">10.20</text><text x="1834" y="594" class="n o e">470</text><text x="1852" y="594" class="n r">B</text><text x="1893" y="594" class="n d e">81</text>
<text x="1752" y="612" class="n r e">10.20</text><text x="1834" y="612" class="n o e">119</text><text x="1852" y="612" class="n r">B</text><text x="1893" y="612" class="n d e">21</text>
<text x="1752" y="630" class="n r e">10.20</text><text x="1834" y="630" class="n o e">130</text><text x="1893" y="630" class="n d e">15</text>
<text x="1752" y="648" class="n r e">10.19</text><text x="1834" y="648" class="n o e">274</text><text x="1852" y="648" class="n ng">S</text><text x="1893" y="648" class="n d e">24</text>
<text x="1752" y="666" class="n r e">10.18</text><text x="1834" y="666" class="n o e">236</text><text x="1852" y="666" class="n ng">S</text><text x="1893" y="666" class="n d e">32</text>
<text x="1752" y="684" class="n r e">10.18</text><text x="1834" y="684" class="n o e">179</text><text x="1852" y="684" class="n ng">S</text><text x="1893" y="684" class="n d e">17</text>
<text x="1752" y="702" class="n r e">10.18</text><text x="1834" y="702" class="n o e">73</text><text x="1852" y="702" class="n ng">S</text><text x="1893" y="702" class="n d e">13</text>
<text x="1752" y="720" class="n r e">10.18</text><text x="1834" y="720" class="n p e">536</text><text x="1852" y="720" class="n ng">S</text><text x="1893" y="720" class="n d e">48</text>
<text x="1752" y="738" class="n r e">10.18</text><text x="1834" y="738" class="n o e">270</text><text x="1852" y="738" class="n r">B</text><text x="1893" y="738" class="n d e">20</text>
<text x="1752" y="756" class="n r e">10.18</text><text x="1834" y="756" class="n p e">550</text><text x="1852" y="756" class="n r">B</text><text x="1893" y="756" class="n d e">38</text>
<text x="1752" y="774" class="n r e">10.18</text><text x="1834" y="774" class="n p e">939</text><text x="1852" y="774" class="n r">B</text><text x="1893" y="774" class="n d e">64</text>
<text x="1752" y="792" class="n r e">10.19</text><text x="1834" y="792" class="n o e">414</text><text x="1852" y="792" class="n r">B</text><text x="1893" y="792" class="n d e">38</text>
<text x="1752" y="810" class="n r e">10.17</text><text x="1834" y="810" class="n o e">448</text><text x="1852" y="810" class="n ng">S</text><text x="1893" y="810" class="n d e">24</text>
<text x="1752" y="828" class="n r e">10.17</text><text x="1834" y="828" class="n o e">177</text><text x="1852" y="828" class="n ng">S</text><text x="1893" y="828" class="n d e">14</text>
<text x="1752" y="846" class="n r e">10.19</text><text x="1834" y="846" class="n o e">480</text><text x="1852" y="846" class="n r">B</text><text x="1893" y="846" class="n d e">25</text>
<text x="1752" y="864" class="n r e">10.19</text><text x="1834" y="864" class="n p e">576</text><text x="1852" y="864" class="n r">B</text><text x="1893" y="864" class="n d e">35</text>
<text x="1752" y="882" class="n r e">10.18</text><text x="1834" y="882" class="n o e">224</text><text x="1852" y="882" class="n ng">S</text><text x="1893" y="882" class="n d e">23</text>
<text x="1752" y="900" class="n r e">10.17</text><text x="1834" y="900" class="n o e">121</text><text x="1852" y="900" class="n ng">S</text><text x="1893" y="900" class="n d e">20</text>
<text x="1752" y="918" class="n r e">10.19</text><text x="1834" y="918" class="n o e">87</text><text x="1852" y="918" class="n r">B</text><text x="1893" y="918" class="n d e">13</text>
<text x="1752" y="936" class="n r e">10.18</text><text x="1834" y="936" class="n o e">99</text><text x="1852" y="936" class="n ng">S</text><text x="1893" y="936" class="n d e">12</text>
<text x="1617" y="954" class="n g">14:57</text><text x="1752" y="954" class="n r e">10.18</text><text x="1834" y="954" class="n p e">577</text><text x="1852" y="954" class="n ng">S</text><text x="1893" y="954" class="n d e">38</text>
<text x="1617" y="972" class="n g">15:00</text><text x="1752" y="972" class="n r e">10.17</text><text x="1834" y="972" class="n p e">11507</text><text x="1893" y="972" class="n d e">670</text></g>
<path d="M1616 581.500H1895M1616 942.500H1895M1616 959.500H1895" stroke="#a00000" stroke-dasharray="2 2" fill="none"/>

<!-- sidebar icons -->
<g fill="none" stroke="#2060d0" stroke-width="1.200">
<path d="M1899 42l8-7v4h8v6h-8v4z"/>
<path d="M1908 55l7 8h-4v9h-6v-9h-4z"/>
<path d="M1908 97l7-8h-4v-9h-6v9h-4z"/>
<rect x="1901" y="103" width="14" height="15"/><rect x="1901" y="126" width="14" height="15"/><rect x="1901" y="150" width="14" height="15"/><rect x="1901" y="174" width="14" height="15"/>
<path d="M1904 196h14v11h-14zM1901 199h14v11h-14z"/>
<rect x="1900" y="220" width="15" height="15"/><rect x="1900" y="243" width="15" height="15"/><rect x="1900" y="266" width="15" height="15"/><rect x="1900" y="288" width="15" height="15"/><rect x="1900" y="311" width="15" height="15"/><rect x="1900" y="333" width="15" height="15"/>
<rect x="1900" y="364" width="15" height="15"/><rect x="1900" y="488" width="15" height="15"/>
</g>
<path d="M1903 107h10M1903 111h10M1903 115h7" stroke="#d04040" fill="none"/>
<path d="M1903 130h3v3h-3zM1908 130h3v3h-3zM1903 135h3v3h-3zM1908 135h3v3h-3z" fill="#208040"/>
<path d="M1902 163l4-5 3 2 5-6" stroke="#d02020" fill="none"/>
<path d="M1904 178h3v8h-3zM1910 180h3v6h-3z" fill="#d02020"/>
<path d="M1904 204h9M1904 207h9" stroke="#303050" fill="none"/>
<path d="M1903 248h4v3h-4zM1909 252h4v3h-4z" fill="#f0a020"/>
<path d="M1902 370l4 3 4-3 4 3M1902 374l4 3 4-3 4 3" stroke="#d04040" fill="none"/>
<rect x="1901" y="511" width="14" height="13" fill="#a0c0f0"/><circle cx="1908" cy="517" r="4" fill="none" stroke="#30a030" stroke-width="2"/>
<path d="M1908 432l3 3h-2v4h4v-2l3 3-3 3v-2h-4v4h2l-3 3-3-3h2v-4h-4v2l-3-3 3-3v2h4v-4h-2z" fill="#1040a0"/>
<path d="M1902 472l9-11 3 3-9 11-4 1z" fill="#e8a030" stroke="#806030" stroke-width=".5"/>
<rect x="1897" y="355" width="21" height="1" fill="#a0a0a0"/><rect x="1897" y="479" width="21" height="1" fill="#a0a0a0"/>
<rect x="1896.500" y="645.500" width="23" height="22" fill="#fff" stroke="#c0c0c0"/>
<g>
<text x="1908" y="232" class="sb b" style="font-size:10px">F10</text>
<text x="1908" y="278" class="sb b" style="font-size:11px" fill="#e06020">自</text>
<text x="1908" y="300" class="sb b" style="font-size:10px">F12</text>
<text x="1908" y="322" class="sb" style="font-size:10px" fill="#106060">f(x)</text>
<text x="1908" y="345" class="sb" style="font-size:12px">○</text>
<text x="1908" y="399" class="sb b" style="font-size:10px">RSI</text>
<text x="1908" y="423" class="sb b" style="font-size:14px" fill="#c03030">S</text>
<text x="1908" y="499" class="sb b" style="font-size:10px">F5</text>
<text x="1907" y="545" class="sb">1</text><text x="1907" y="568" class="sb">5</text><text x="1907" y="591" class="sb">15</text><text x="1907" y="614" class="sb">30</text><text x="1907" y="637" class="sb">60</text>
<text x="1908" y="661" class="sb">日</text><text x="1908" y="683" class="sb">周</text><text x="1908" y="706" class="sb">月</text><text x="1908" y="729" class="sb">N</text><text x="1908" y="752" class="sb">多</text><text x="1908" y="775" class="sb">季</text><text x="1908" y="798" class="sb">年</text>
</g>
</svg>
</body>
</html>
